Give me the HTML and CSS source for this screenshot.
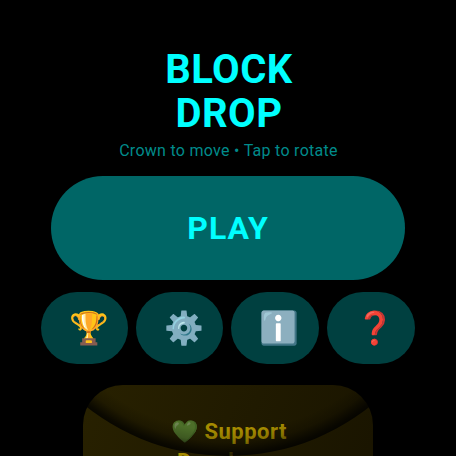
FILE: index.html
```html
<!DOCTYPE html>
<html lang="en"><head><meta charset="utf-8"><title>Block Drop</title><link rel="stylesheet" href="styles.css"></head>
<body>
<main class="screen">
<h1 class="title">BLOCK<br>DROP</h1>
<p class="hint">Crown to move • Tap to rotate</p>
<button class="play">PLAY</button>
<nav class="actions"><button class="action">🏆</button><button class="action">⚙️</button><button class="action">ℹ️</button><button class="action">❓</button></nav>
<button class="support"><span class="heart">💚</span> Support<br>Developer</button>
<div class="edge"></div>
</main>
</body></html>
```
FILE: styles.css
```css
body{margin:0;background:#000;font-family:Roboto,sans-serif}
button{border:0;padding:0;font-family:inherit}
.screen{position:relative;height:456px;overflow:hidden;display:flex;flex-direction:column;align-items:center;box-sizing:border-box;padding-top:48px}
.title{margin:0;padding-left:2px;color:#0ff;font-size:40px;line-height:44px;font-weight:700;text-align:center;letter-spacing:.5px;flex:none}
.hint{flex:none;margin:5px 0 0;padding-left:1px;height:35px;line-height:20px;font-size:16px;letter-spacing:.28px;color:#008b8b}
.play{flex:none;width:354px;height:104px;border-radius:52px;background:#006666;color:#0ff;font-size:32px;font-weight:700;letter-spacing:1px}
.actions{flex:none;display:grid;grid-template-columns:87px 87px 88px 88px;gap:8px;margin-top:12px}
.action{height:72px;border-radius:36px;background:#004040;font-size:32px;padding-left:8px}
.support{flex:none;margin-top:21px;padding-left:2px;width:290px;height:124px;border-radius:40px;background:linear-gradient(110deg,#282100,#191400);color:#a58b00;font-size:22px;font-weight:700;line-height:30px;letter-spacing:.5px}
.heart{filter:brightness(.62)}
.edge{position:absolute;inset:0;border-radius:50%;clip-path:inset(380px 0 0 0);background:radial-gradient(circle closest-side,transparent 89%,rgba(0,0,0,.2) 94%,rgba(0,0,0,.7) 98.5%,#000c 100%)}
```
